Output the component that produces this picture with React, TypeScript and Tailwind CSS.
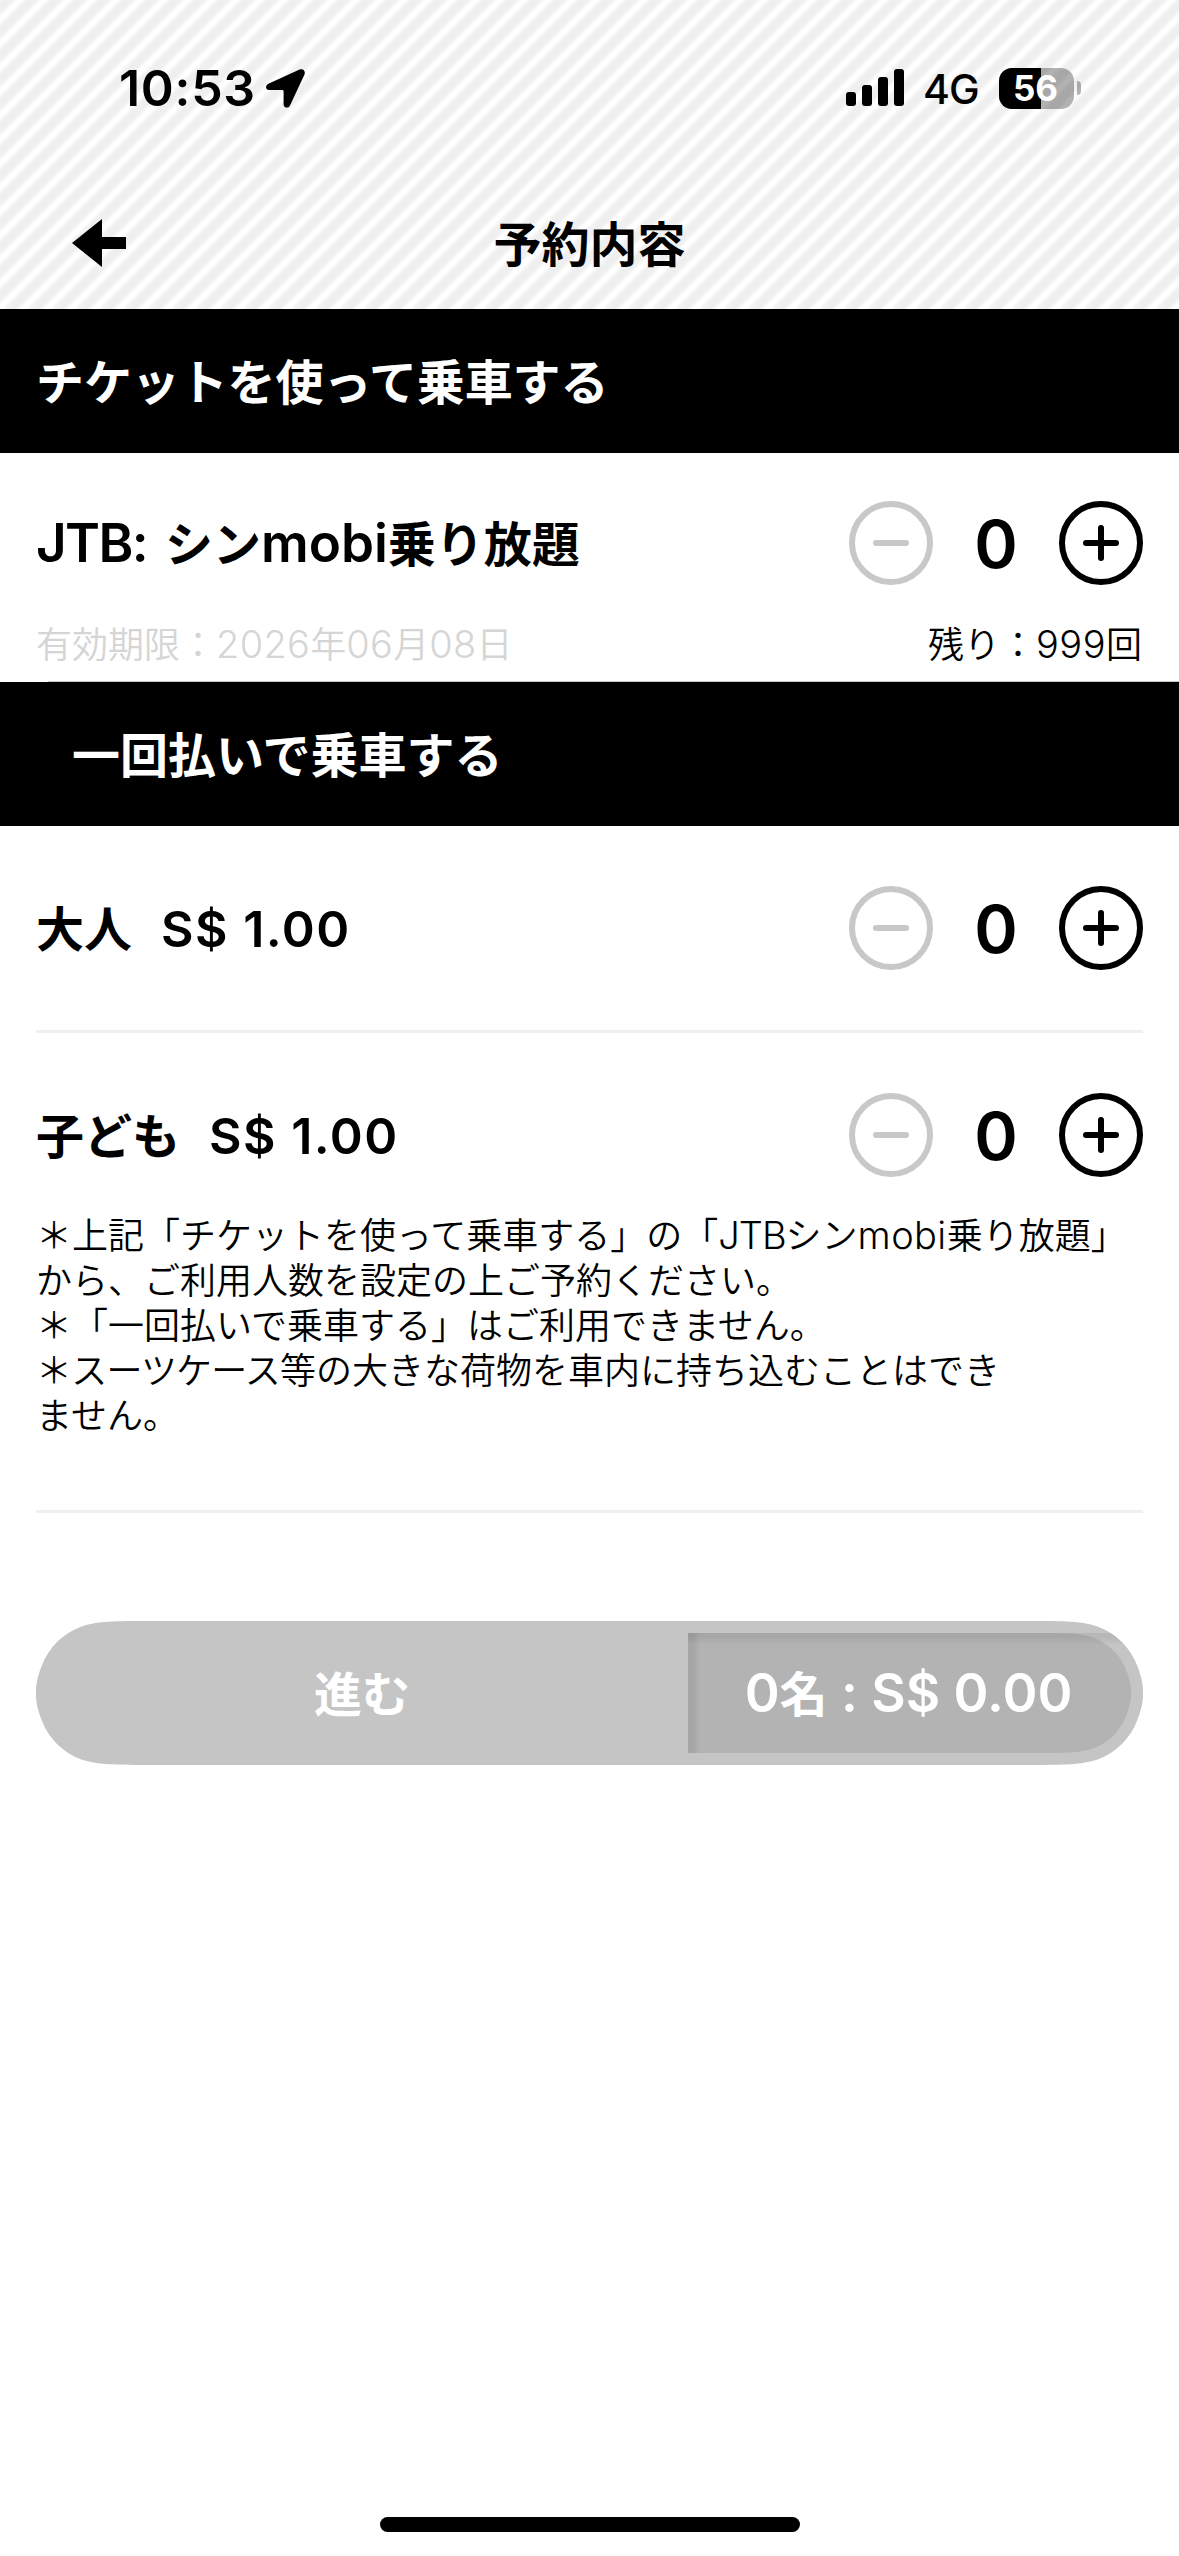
import {ReactNode} from "react";
import {clsx} from "clsx";

function Latin({children, className}: { children: ReactNode; className?: string }) {
    return <span className={clsx("font-[Inter] leading-none", className)}>{children}</span>
}

function StatusBar() {
    return (
        <div className="flex h-[177px] items-start justify-between pt-[58px] pr-[98px] pl-[119px] font-[Inter]">
            <div className="flex h-[60px] items-center">
                <span className="w-[147px] text-[50px] font-semibold tracking-[0.7px] whitespace-nowrap">10:53</span>
                <svg width="39" height="39" viewBox="0 0 39 39" className="mt-px">
                    <path d="M33.6 .6 2.4 14.8C-1 16.5-.6 21 3.2 21H16.4Q17.6 21 17.6 22.2V35.2C17.6 39.2 22.4 39.8 24 36.4L38.5 5.4C39.8 2 37-.9 33.6 .6Z"/>
                </svg>
            </div>
            <div className="flex h-[60px] items-center">
                <svg width="58" height="38" viewBox="0 0 58 38">
                    <rect x="0" y="23" width="10" height="14" rx="3"/>
                    <rect x="16" y="16" width="10" height="21" rx="3"/>
                    <rect x="32" y="8" width="10" height="29" rx="3"/>
                    <rect x="48" y="0" width="10" height="37" rx="3"/>
                </svg>
                <span className="ml-[19px] w-[76px] pt-[3px] text-[41px] font-medium tracking-[-1px]">4G</span>
                <div className="relative flex h-[41px] w-[75px] items-center justify-center overflow-hidden rounded-[13px] bg-black/30">
                    <div className="absolute inset-y-0 left-0 w-[42px] bg-black"/>
                    <span className="relative pr-[2px] text-[35px] font-bold text-white">56</span>
                </div>
                <div className="ml-[3px] h-[14px] w-[4px] rounded-r-full bg-black/30"/>
            </div>
        </div>
    )
}

function Header() {
    return (
        <header className="h-[309px] bg-[repeating-linear-gradient(135deg,#f8f8f8_0px,#efefef_3px,#efefef_8.5px,#ffffff_12.5px,#ffffff_15.5px,#f8f8f8_16.97px)]">
            <StatusBar/>
            <div className="grid h-[132px] grid-cols-3 items-center px-[72px]">
                <svg width="54" height="48" viewBox="0 0 54 48">
                    <path d="M0 24 30 0V18H54V30H30V48Z"/>
                </svg>
                <h1 className="pb-[4px] text-center text-[48px] leading-none font-bold">予約内容</h1>
            </div>
        </header>
    )
}

function Stepper() {
    return (
        <div className="flex items-center">
            <button className="flex size-[84px] items-center justify-center rounded-full border-6 border-[#c8c8c8]">
                <span className="h-[6px] w-[36px] rounded-full bg-[#c8c8c8]"/>
            </button>
            <span className="w-[126px] pt-[2px] text-center font-[Inter] text-[66px] leading-none font-semibold">0</span>
            <button className="grid size-[84px] place-items-center rounded-full border-6 border-black">
                <span className="col-start-1 row-start-1 h-[6px] w-[36px] rounded-full bg-black"/>
                <span className="col-start-1 row-start-1 h-[36px] w-[6px] rounded-full bg-black"/>
            </button>
        </div>
    )
}

function Fare({label, price}: { label: string; price: string }) {
    return (
        <div className="flex h-[204px] items-center justify-between">
            <p className="flex items-baseline gap-[29px] text-[48px] leading-none font-bold">
                {label}
                <Latin className="text-[50px] font-semibold tracking-[1.5px]">{price}</Latin>
            </p>
            <Stepper/>
        </div>
    )
}

function App() {
    return (
        <div className="flex h-[2556px] w-[1179px] flex-col bg-white font-['Noto_Sans_CJK_JP',sans-serif] text-black">
            <Header/>
            <h2 className="flex h-[144px] items-center bg-black px-[36px] pb-[4px] text-[48px] font-bold tracking-[-0.1px] text-white">
                チケットを使って乗車する
            </h2>
            <section className="flex h-[229px] flex-col">
                <div className="flex h-[180px] items-center justify-between px-[36px]">
                    <p className="text-[48px] leading-none font-bold whitespace-pre">
                        <Latin className="mr-[6px] text-[53px] font-semibold tracking-[-1.6px]">JTB: </Latin>シン<Latin className="text-[53px] font-semibold">mobi</Latin>乗り放題
                    </p>
                    <Stepper/>
                </div>
                <div className="-mt-[8px] flex h-[36px] items-center justify-between px-[36px] text-[36px] leading-none font-[350]">
                    <p className="text-[#d5d5d5]">
                        有効期限：<Latin className="text-[38px] tracking-[0.3px]">2026</Latin>年<Latin className="text-[38px] tracking-[0.3px]">06</Latin>月<Latin className="text-[38px] tracking-[0.3px]">08</Latin>日
                    </p>
                    <p className="pr-px">残り：<Latin className="text-[38px] tracking-[0.5px]">999</Latin>回</p>
                </div>
                <div className="mt-auto ml-[48px] h-px shrink-0 bg-[#c6c6c8]"/>
            </section>
            <h2 className="flex h-[144px] items-center bg-black px-[72px] pb-[4px] text-[48px] font-bold text-white">
                一回払いで乗車する
            </h2>
            <main className="px-[36px]">
                <Fare label="大人" price="S$ 1.00"/>
                <div className="h-[3px] bg-[#efefef]"/>
                <Fare label="子ども" price="S$ 1.00"/>
                <div className="-mt-[26px] h-[299px] text-[36px] leading-[45px] font-[350] whitespace-nowrap">
                    <p>＊上記「チケットを使って乗車する」の「<Latin className="text-[38px] tracking-[-1px]">JTB</Latin>シン<Latin className="text-[38px] tracking-[0.4px]">mobi</Latin>乗り放題」</p>
                    <p>から、ご利用人数を設定の上ご予約ください。</p>
                    <p>＊「一回払いで乗車する」はご利用できません。</p>
                    <p><span className="tracking-[-0.8px]">＊スーツケース</span>等の大きな荷物を車内に持ち込むことはでき</p>
                    <p>ません。</p>
                </div>
                <div className="h-[3px] bg-[#efefef]"/>
                <button className="mt-[108px] flex h-[144px] w-full items-center bg-[#c5c5c5] text-[48px] leading-none font-bold text-white [clip-path:path('M110_0C78.4_0_62.5_0_45.5_5.4C26.8_12.2_12.2_26.8_5.4_45.5C0_60_0_66_0_72C0_78_0_84_5.4_98.5C12.2_117.2_26.8_131.8_45.5_138.6C62.5_144_78.4_144_110_144H997C1028.6_144_1044.5_144_1061.5_138.6C1080.2_131.8_1094.8_117.2_1101.6_98.5C1107_84_1107_78_1107_72C1107_66_1107_60_1101.6_45.5C1094.8_26.8_1080.2_12.2_1061.5_5.4C1044.5_0_1028.6_0_997_0Z')]">
                    <span className="w-[652px] pb-[4px] text-center">進む</span>
                    <span className="relative h-[120px] flex-1">
                        <span className="flex h-full w-[443px] items-center justify-center bg-[#b3b3b3] pr-[2px] whitespace-pre [clip-path:path('M0_0H351.3C377.7_0_390.9_0_405.1_4.5C420.6_10.1_432.9_22.4_438.5_37.9C443_50_443_55_443_60C443_65_443_70_438.5_82.1C432.9_97.6_420.6_109.9_405.1_115.5C390.9_120_377.7_120_351.3_120H0Z')]">
                            <span>
                                <Latin className="text-[53px] font-semibold">0</Latin>名<Latin className="text-[53px] font-semibold"> : S$ 0.00</Latin>
                            </span>
                        </span>
                        <span className="absolute inset-x-0 top-0 h-[12px] bg-linear-to-b from-black/7 from-30% to-transparent"/>
                        <span className="absolute inset-y-0 left-0 w-[12px] bg-linear-to-r from-black/7 from-50% to-transparent"/>
                    </span>
                </button>
            </main>
            <div className="mx-auto mt-auto mb-[24px] h-[15px] w-[420px] rounded-full bg-black"/>
        </div>
    )
}

export default App
